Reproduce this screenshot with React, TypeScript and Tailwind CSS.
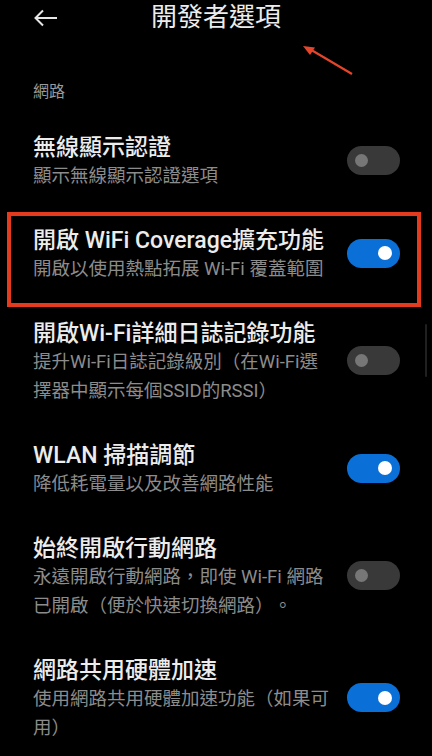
import React from "react";

type Row = {
  title: string;
  sub: string;
  on: boolean;
  marked?: boolean;
};

const rows: Row[] = [
  { title: "無線顯示認證", sub: "顯示無線顯示認證選項", on: false },
  {
    title: "開啟 WiFi Coverage擴充功能",
    sub: "開啟以使用熱點拓展 Wi-Fi 覆蓋範圍",
    on: true,
    marked: true,
  },
  {
    title: "開啟Wi-Fi詳細日誌記錄功能",
    sub: "提升Wi-Fi日誌記錄級別（在Wi-Fi選擇器中顯示每個SSID的RSSI）",
    on: false,
  },
  { title: "WLAN 掃描調節", sub: "降低耗電量以及改善網路性能", on: true },
  {
    title: "始終開啟行動網路",
    sub: "永遠開啟行動網路，即使 Wi-Fi 網路已開啟（便於快速切換網路）。",
    on: false,
  },
  {
    title: "網路共用硬體加速",
    sub: "使用網路共用硬體加速功能（如果可用）",
    on: true,
  },
];

const Toggle = ({ on }: { on: boolean }) => (
  <div
    className={
      on
        ? "flex items-center justify-end px-[8px] w-[53px] h-[29px] rounded-full bg-[#0b6fd8] shrink-0"
        : "flex items-center justify-start px-[8px] w-[53px] h-[29px] rounded-full bg-[#393939] shrink-0"
    }>
    {on ? (
      <span className="w-[14px] h-[14px] rounded-full bg-white" />
    ) : (
      <span className="w-[13px] h-[13px] rounded-full bg-[#777777]" />
    )}
  </div>
);

const SettingRow = ({ row }: { row: Row }) => (
  <div className="relative flex items-center pl-[33px] pr-[32px] pt-[18px] pb-[17px]">
    <div className="w-[303px]">
      <div className="text-[23px] leading-[29px] font-medium text-[#ececec]">
        {row.title}
      </div>
      <div className="text-[18.5px] leading-[29px] text-[#8c8c8c] [text-spacing-trim:space-all]">
        {row.sub}
      </div>
    </div>
    <div className="ml-auto -mt-[4px]">
      <Toggle on={row.on} />
    </div>
    {/* annotation box from the screenshot */}
    {row.marked && (
      <div className="absolute left-[7px] right-[11px] top-[4px] -bottom-[6px] border-[4px] border-[#e43a1d]" />
    )}
  </div>
);

export default function App() {
  return (
    <div
      className="relative w-[432px] h-[756px] overflow-hidden bg-black [text-spacing-trim:space-all]"
      style={{ fontFamily: 'Roboto, "Noto Sans CJK TC", sans-serif' }}>
      <header className="grid grid-cols-[1fr_auto_1fr] items-center h-[34px]">
        <div className="pl-[33px] pt-[1px]">
          <svg
            width="26"
            height="20"
            viewBox="0 0 26 20"
            fill="none"
            stroke="#e6e6e6"
            strokeWidth="2">
            <path d="M24 10H3M10 2.5L2.5 10L10 17.5" />
          </svg>
        </div>
        <h1 className="text-[26px] leading-[34px] font-normal text-[#ececec]">
          開發者選項
        </h1>
        <div />
      </header>

      {/* red arrow annotation */}
      <svg
        className="absolute left-[296px] top-[40px]"
        width="62"
        height="40"
        viewBox="0 0 62 40">
        <path d="M56 34L12 8" stroke="#e5452a" strokeWidth="2.2" />
        <path d="M7 6L19 7.5L14 15Z" fill="#e5452a" />
      </svg>

      <div className="mt-[47px] pl-[33px] text-[16px] leading-[22px] text-[#9a9a9a]">
        網路
      </div>

      <div className="mt-[12px]">
        {rows.map(row => (
          <SettingRow key={row.title} row={row} />
        ))}
      </div>

      <div className="absolute right-[5px] top-[324px] w-[2px] h-[53px] rounded-full bg-[#202020]" />
    </div>
  );
}
